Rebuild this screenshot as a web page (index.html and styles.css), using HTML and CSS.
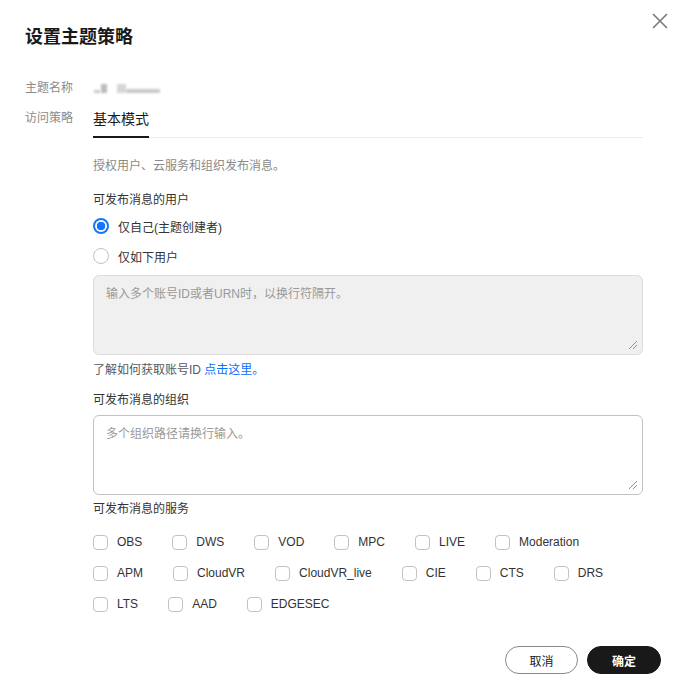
FILE: index.html
```html
<!DOCTYPE html>
<html lang="zh-CN">
<head>
<meta charset="utf-8">
<title>设置主题策略</title>
<link rel="stylesheet" href="styles.css">
</head>
<body>
<div class="dialog">
  <div class="header">
    <h1 class="title">设置主题策略</h1>
    <button class="close" aria-label="关闭">
      <svg width="18" height="18" viewBox="0 0 18 18"><path d="M2 2 L16 16 M16 2 L2 16" stroke="#7a7a7a" stroke-width="1.6" fill="none"/></svg>
    </button>
  </div>

  <div class="form">
    <div class="row">
      <div class="label">主题名称</div>
      <div class="value">
        <span class="blur b1"></span><span class="blur b2"></span><span class="blur b3"></span><span class="blur b4"></span>
      </div>
    </div>

    <div class="row">
      <div class="label">访问策略</div>
      <div class="content">
        <div class="tabs"><div class="tab active">基本模式</div></div>
        <p class="desc">授权用户、云服务和组织发布消息。</p>

        <div class="section-title first">可发布消息的用户</div>
        <label class="radio-row"><span class="radio checked"></span><span>仅自己(主题创建者)</span></label>
        <label class="radio-row second"><span class="radio"></span><span>仅如下用户</span></label>
        <div class="textarea disabled"><span class="ph">输入多个账号ID或者URN时，以换行符隔开。</span><span class="grip"></span></div>
        <div class="help">了解如何获取账号ID <a class="link">点击这里。</a></div>

        <div class="section-title org">可发布消息的组织</div>
        <div class="textarea org-input"><span class="ph">多个组织路径请换行输入。</span><span class="grip"></span></div>

        <div class="section-title svc">可发布消息的服务</div>
        <div class="checks">
          <div class="check-row">
            <label class="check"><span class="box"></span>OBS</label>
            <label class="check"><span class="box"></span>DWS</label>
            <label class="check"><span class="box"></span>VOD</label>
            <label class="check"><span class="box"></span>MPC</label>
            <label class="check"><span class="box"></span>LIVE</label>
            <label class="check"><span class="box"></span>Moderation</label>
          </div>
          <div class="check-row">
            <label class="check"><span class="box"></span>APM</label>
            <label class="check"><span class="box"></span>CloudVR</label>
            <label class="check"><span class="box"></span>CloudVR_live</label>
            <label class="check"><span class="box"></span>CIE</label>
            <label class="check"><span class="box"></span>CTS</label>
            <label class="check"><span class="box"></span>DRS</label>
          </div>
          <div class="check-row">
            <label class="check"><span class="box"></span>LTS</label>
            <label class="check"><span class="box"></span>AAD</label>
            <label class="check"><span class="box"></span>EDGESEC</label>
          </div>
        </div>
      </div>
    </div>
  </div>

  <div class="footer">
    <button class="btn cancel">取消</button>
    <button class="btn ok">确定</button>
  </div>
</div>
</body>
</html>
```

FILE: styles.css
```css
* { box-sizing: border-box; }
html, body { margin: 0; padding: 0; background: #fff; }
body {
  font-family: "Liberation Sans", "Noto Sans CJK SC", sans-serif;
  color: #191919;
  font-size: 12px;
}
.dialog { position: relative; width: 690px; height: 690px; }

.header { padding: 25px 0 0 25px; }
.title {
  margin: 0;
  font-size: 18px;
  line-height: 24px;
  font-weight: bold;
  color: #191919;
}
.close {
  position: absolute;
  top: 12px;
  left: 651px;
  width: 18px;
  height: 18px;
  padding: 0;
  border: 0;
  background: none;
  display: block;
}
.close svg { display: block; }

.form { padding: 29px 47px 0 25px; }
.row { display: flex; margin-bottom: 10px; }
.label {
  width: 68px;
  flex: none;
  line-height: 20px;
  color: #8a8a8a;
}
.value { display: flex; align-items: center; height: 20px; padding-left: 1px; }
.blur { display: inline-block; filter: blur(0.8px); }
.b1 { width: 6px; height: 3px; margin-top: 6px; background: #c8c8c8; }
.b2 { width: 6px; height: 9px; margin-left: 1px; background: #bdbdbd; }
.b3 { width: 9px; height: 9px; margin-left: 10px; background: #d6d6d6; }
.b4 { width: 34px; height: 4px; margin-top: 5px; background: #c9c9c9; }

.content { flex: 1; }
.tabs { border-bottom: 1px solid #ebebeb; display: flex; }
.tab {
  font-size: 14px;
  line-height: 20px;
  padding-top: 1px;
  padding-bottom: 7px;
  color: #191919;
}
.tab.active { border-bottom: 2px solid #191919; margin-bottom: -1px; }

.desc { margin: 18px 0 0; line-height: 20px; color: #8a8a8a; }
.section-title { line-height: 20px; color: #333; }
.section-title.first { margin-top: 14px; }
.section-title.org { margin-top: 10px; }
.section-title.svc { margin-top: 4px; }

.radio-row { display: flex; align-items: center; height: 20px; margin-top: 6px; color: #333; }
.radio-row.second { margin-top: 10px; }
.radio {
  width: 16px; height: 16px;
  border: 1px solid #c2c2c2;
  border-radius: 50%;
  margin-right: 9px;
  flex: none;
  background: #fff;
}
.radio.checked {
  border: 2px solid #1476ff;
  background: radial-gradient(circle, #1476ff 0, #1476ff 4px, #fff 4.6px);
}

.textarea {
  position: relative;
  height: 80px;
  margin-top: 9px;
  border: 1px solid #c2c2c2;
  border-radius: 6px;
  padding: 8px 12px;
  line-height: 20px;
  background: #fff;
}
.textarea.disabled { background: #f0f0f0; border-color: #dcdcdc; }
.textarea.org-input { margin-top: 5px; }
.ph { color: #999; }
.grip {
  position: absolute;
  right: 5px; bottom: 5px;
  width: 8px; height: 8px;
  background: linear-gradient(135deg, transparent 45%, #8f8f8f 45%, #8f8f8f 55%, transparent 55%, transparent 70%, #8f8f8f 70%, #8f8f8f 80%, transparent 80%);
}

.help { margin-top: 5px; line-height: 20px; color: #595959; }
.link { color: #0b6fff; text-decoration: none; }

.checks { margin-top: 13px; }
.check-row { display: flex; height: 20px; margin-bottom: 11px; }
.check {
  display: flex;
  align-items: center;
  margin-right: 30px;
  color: #333;
  line-height: 20px;
}
.box {
  width: 15px; height: 15px;
  border: 1px solid #c2c2c2;
  border-radius: 4px;
  margin-right: 9px;
  background: #fff;
  flex: none;
}

.footer {
  display: flex;
  justify-content: flex-end;
  gap: 9px;
  padding: 0 29px 0 0;
  margin-top: 21px;
}
.btn {
  height: 28px;
  border-radius: 14px;
  font-family: "Liberation Sans", "Noto Sans CJK SC", sans-serif;
  font-size: 12px;
  padding: 0;
}
.cancel { width: 73px; border: 1px solid #8a8a8a; background: #fff; color: #191919; }
.ok { width: 74px; border: 1px solid #191919; background: #191919; color: #fff; font-weight: bold; }
```
